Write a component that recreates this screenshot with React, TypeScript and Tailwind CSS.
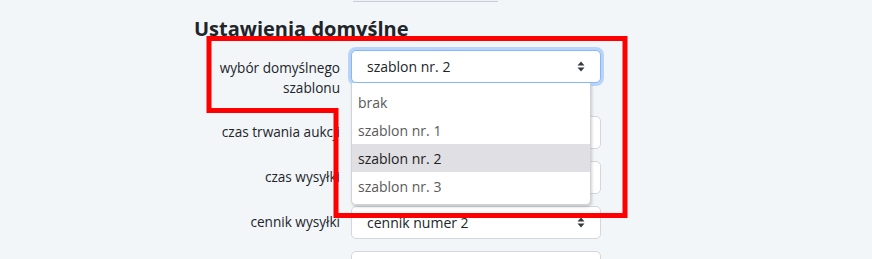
import React from "react";

// ==================== Helpers ====================

function SortArrows() {
    return (
        <svg width="8" height="11" viewBox="0 0 8 11" className="shrink-0">
            <path d="M0.5 4.5 L4 0.5 L7.5 4.5 Z" fill="#343a40" />
            <path d="M0.5 6.5 L4 10.5 L7.5 6.5 Z" fill="#343a40" />
        </svg>
    );
}

function FakeSelect({ value, focused = false }: { value?: string; focused?: boolean }) {
    return (
        <div
            className={
                "flex h-[33px] w-[250px] items-center justify-between rounded-[5px] border bg-white pl-[15px] pr-[15px] text-[14px] text-[#212529] " +
                (focused ? "border-[#86b7fe] shadow-[0_0_0_3px_rgba(13,110,253,0.25)]" : "border-[#d3d7dc]")
            }
        >
            <span>{value}</span>
            {value && <SortArrows />}
        </div>
    );
}

const OPTIONS = ["brak", "szablon nr. 1", "szablon nr. 2", "szablon nr. 3"];

// ==================== Component ====================

export default function App() {
    return (
        <div
            className="relative h-[259px] overflow-hidden bg-[#f3f6f9]"
            style={{ fontFamily: '"Open Sans", "Noto Sans", sans-serif' }}
        >
            <div className="ml-[194px] w-[407px]">
                {/* bottom edge of element above */}
                <div className="flex">
                    <div className="w-[159px]" />
                    <div className="h-[2px] w-[145px] border-b border-[#c9ced6] bg-[#eef1f5]" />
                </div>

                <h2 className="mt-[15px] mb-[9px] text-[20px] leading-6 font-bold text-[#212529]">
                    Ustawienia domyślne
                </h2>

                {/* wybór szablonu */}
                <div className="mb-3 flex gap-[11px]">
                    <label className="w-[146px] pt-[8px] pb-[6px] text-right text-[13.6px] leading-5 text-[#212529]">
                        wybór domyślnego szablonu
                    </label>
                    <div className="relative">
                        <FakeSelect value="szablon nr. 2" focused />
                        {/* open dropdown list */}
                        <div className="absolute left-0 top-[33px] z-10 w-[240px] rounded-b-[5px] border border-t-0 border-[#cfd2d6] bg-white pt-[5px] pb-[4px] shadow-[1px_2px_3px_rgba(0,0,0,0.18)]">
                            {OPTIONS.map((opt) => (
                                <div
                                    key={opt}
                                    className={
                                        "flex h-[28px] items-center px-[6px] text-[14px] " +
                                        (opt === "szablon nr. 2" ? "bg-[#e0dfe4] text-[#222]" : "text-[#5a5a5a]")
                                    }
                                >
                                    {opt}
                                </div>
                            ))}
                        </div>
                    </div>
                </div>

                <div className="mb-3 flex gap-[11px]">
                    <label className="w-[146px] pt-[6px] text-right text-[13.6px] leading-5 text-[#212529]">
                        czas trwania aukcji
                    </label>
                    <FakeSelect value="" />
                </div>

                <div className="mb-3 flex gap-[11px]">
                    <label className="w-[146px] pt-[6px] text-right text-[13.6px] leading-5 text-[#212529]">
                        czas wysyłki
                    </label>
                    <FakeSelect value="" />
                </div>

                <div className="mb-3 flex gap-[11px]">
                    <label className="w-[146px] pt-[6px] text-right text-[13.6px] leading-5 text-[#212529]">
                        cennik wysyłki
                    </label>
                    <FakeSelect value="cennik numer 2" />
                </div>

                <div className="mb-3 flex gap-[11px]">
                    <div className="w-[146px]" />
                    <FakeSelect value="" />
                </div>
            </div>

            {/* red annotation outline */}
            <svg className="pointer-events-none absolute inset-0 z-20" width="872" height="259">
                <polygon
                    points="209,38.5 625,38.5 625,215.5 336,215.5 336,110.5 209,110.5"
                    fill="none"
                    stroke="#ff0000"
                    strokeWidth="5"
                />
            </svg>
        </div>
    );
}
